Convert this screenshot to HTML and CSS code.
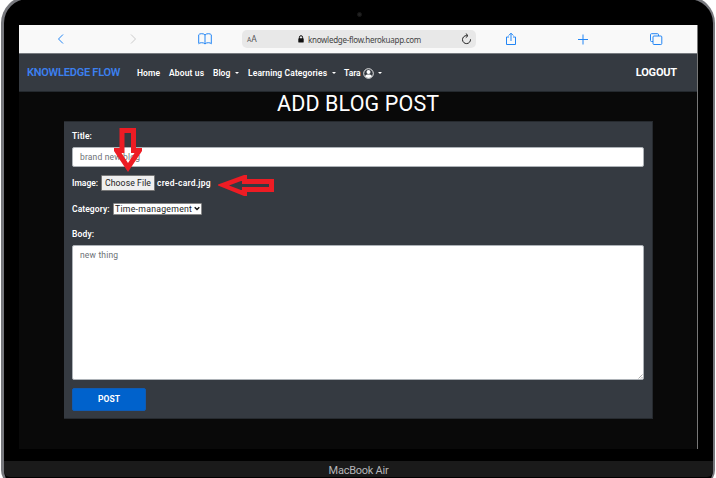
FILE: index.html
```html
<!DOCTYPE html>
<html lang="en">
<head>
<meta charset="utf-8">
<title>Knowledge Flow</title>
<link rel="stylesheet" href="styles.css">
</head>
<body>
<div class="laptop">
  <div class="bezel"><i class="camera"></i></div>
  <div class="screen">
    <div class="browser">
      <svg class="ic back" viewBox="0 0 14 14"><path d="M9 2.500 4.500 7 9 11.500"/></svg>
      <svg class="ic fwd" viewBox="0 0 14 14"><path d="M5 2.500 9.500 7 5 11.500"/></svg>
      <svg class="ic book" viewBox="0 0 14 14"><path d="M.7 11.500V2.800Q1.200 1.700 3.700 1.700T7 3v9Q6 10.700 3.700 10.700T.7 11.800M7 3Q8 1.700 10.300 1.700T13.300 2.800v9Q12.600 10.700 10.300 10.700T7 12"/></svg>
      <div class="address">
        <span class="aa"><small>A</small>A</span>
        <svg class="lock" viewBox="0 0 6 8"><path d="M1.400 4V2.300a1.600 1.600 0 0 1 3.200 0V4" fill="none" stroke="#111"/><rect x=".3" y="3.300" width="5.400" height="4.300" rx=".7" fill="#111"/></svg>
        <span class="url">knowledge-flow.herokuapp.com</span>
        <svg class="reload" viewBox="0 0 11 12"><path d="M9.500 6.300A4 4 0 1 1 5.500 2.600h1M4.800.5 7 2.600 4.800 4.700" fill="none" stroke="#222"/></svg>
      </div>
      <svg class="ic share" viewBox="0 0 14 14"><path d="M5 5H2.500v7.500h9V5H9M7 9V1.300M4.700 3.500 7 1.200l2.300 2.300"/></svg>
      <svg class="ic plus" viewBox="0 0 14 14"><path d="M7 2.500v10M2 7.500h10"/></svg>
      <svg class="ic tabs" viewBox="0 0 14 14"><rect x="4" y="4" width="8.800" height="8.500" rx="1"/><path d="M4 9.500H2.500q-1 0-1-1V2.700q0-1 1-1h6q1 0 1 1V4"/></svg>
    </div>
    <nav class="nav">
      <span class="brand">KNOWLEDGE FLOW</span>
      <span class="link home">Home</span>
      <span class="link about">About us</span>
      <span class="link blog">Blog</span><i class="caret"></i>
      <span class="link cats">Learning Categories</span><i class="caret"></i>
      <span class="link tara">Tara</span>
      <svg class="user" viewBox="0 0 11 11"><circle cx="5.500" cy="5.500" r="4.800" fill="none" stroke="#fff" stroke-width=".9"/><circle cx="5.500" cy="4.100" r="2" fill="#fff"/><path d="M2 8.300q.7-1.800 2.200-1.800h2.600q1.500 0 2.200 1.800-3.500 3.200-7 0" fill="#fff"/></svg><i class="caret"></i>
      <span class="logout">LOGOUT</span>
    </nav>
    <h1 class="heading"><span>ADD BLOG POST</span></h1>
    <main class="card">
      <div class="label title-label"><span class="t-title">Title:</span></div>
      <div class="field"><span class="t-brand">brand new blog</span></div>
      <div class="row image-row"><span class="label t-image">Image:</span><span class="choose"><span>Choose File</span></span><span class="label filename">cred-card.jpg</span></div>
      <div class="row category-row"><span class="label t-category">Category:</span><span class="select"><span>Time-management</span><svg viewBox="0 0 6 5"><path d="M.7 1.200 3 3.500l2.300-2.300" fill="none" stroke="#111" stroke-width="1.400"/></svg></span></div>
      <div class="label body-label"><span class="t-body">Body:</span></div>
      <div class="field area"><span class="t-new">new thing</span><svg class="grip" viewBox="0 0 5 5"><path d="M.5 4.500l4-4M3 4.500 4.500 3" stroke="#888" stroke-width=".7"/></svg></div>
      <div class="post"><span>POST</span></div>
    </main>
  </div>
  <div class="chin"><span>MacBook Air</span></div>
  <svg class="arrow down" viewBox="0 0 30 45"><path d="M6.500 1H23v20h6v3L15 45 1 24v-3h5.500zM11.500 6v20H8.500l6.500 10 6.500-10H18V6z"/></svg>
  <svg class="arrow left" viewBox="0 0 58 22"><path d="M1 11.500v-1L27 1h3v4h27v13H30v4h-3zM12 11.500 24 16h1v-3h27v-3H25V7h-1z"/></svg>
</div>
</body>
</html>
```
FILE: styles.css
```css
* { box-sizing: border-box; }
body { margin: 0; width: 716px; height: 478px; overflow: hidden; background: #fff; font-family: Roboto, "Liberation Sans", sans-serif; }
span { white-space: nowrap; }
svg, i { flex: none; }
.laptop { position: relative; width: 714px; height: 490px; margin: -4px 0 0 1px; background: #000; border: solid #77787d; border-width: 3px 2px 0 3px; border-radius: 27px 27px 16px 16px; display: flex; flex-direction: column; }
.bezel { height: 26px; display: flex; justify-content: center; align-items: center; padding: 4px 0 0 3px; }
.camera { width: 5px; height: 5px; margin-left: -2px; border-radius: 50%; background: #222; border: 1px solid #171717; }
.screen { width: 679px; height: 424px; margin-left: 15px; background: #090909; border-right: 1px solid #777; }
.browser { height: 29px; background: #f9f9f9; border-bottom: 1px solid #777b80; display: flex; align-items: center; }
.ic { width: 14px; height: 14px; fill: none; stroke: #2386f5; stroke-width: 1; }
.back { margin-left: 35px; }
.fwd { margin-left: 58px; stroke: #ccc; }
.book { margin-left: 58px; }
.address { width: 234px; height: 18px; margin-left: 30px; border-radius: 5px; background: #e8e8e8; display: flex; align-items: center; color: #555; }
.aa { width: 10px; margin-left: 5px; font-size: 8.5px; line-height: 10px; padding-top: 1px; }
.aa small { font-size: 6.5px; }
.lock { width: 6px; height: 8px; margin-left: 41px; }
.url { width: 114px; margin-left: 4px; font: 8px "Noto Sans", "Open Sans", sans-serif; letter-spacing: -.27px; color: #444; }
.reload { width: 11px; height: 12px; margin-left: 39px; }
.share { margin-left: 28px; }
.plus { margin-left: 58px; }
.tabs { margin-left: 59px; }
.nav { height: 38px; background: #353a41; border-bottom: 1px solid #24292e; display: flex; align-items: center; color: #fff; }
.brand { width: 94px; margin-left: 8px; color: #3c80ef; font-weight: 600; font-size: 11px; letter-spacing: -.24px; }
.link { font-size: 8.5px; font-weight: 600; }
.home { width: 23px; margin-left: 16px; letter-spacing: .1px; }
.about { width: 36px; margin-left: 9px; letter-spacing: .13px; }
.blog { width: 18px; margin-left: 8px; }
.cats { width: 80px; margin-left: 9px; letter-spacing: .12px; }
.tara { width: 17px; margin-left: 8px; }
.caret { width: 4px; height: 2px; margin-left: 4px; border: solid transparent; border-width: 2px 2px 0; border-top-color: #fff; }
.user { width: 11px; height: 11px; margin: 1px 0 0 2px; }
.logout { margin: 0 20px 0 auto; font-size: 11px; font-weight: 700; letter-spacing: -.18px; }
.heading { margin: 0; height: 29px; line-height: 24px; padding-left: 258px; font-size: 21.5px; font-weight: 400; letter-spacing: .13px; color: #fff; }
.card { width: 589px; height: 298px; margin-left: 45px; padding: 0 8px; background: #353a41; border: 1px solid #262a2f; border-left: 0; }
.label { font-size: 8.5px; font-weight: 600; color: #fff; }
.title-label { height: 25px; line-height: 28px; letter-spacing: .1px; }
.field { height: 20px; width: 572px; background: #fff; border: 1px solid #adb2b7; border-radius: 2px; padding-left: 7px; line-height: 18px; font-size: 8.5px; color: #6c7176; letter-spacing: .17px; }
.row { display: flex; align-items: center; }
.image-row { height: 32px; }
.choose { width: 54px; height: 16px; margin-left: 2px; background: #efefef; border: 1px solid #777; border-radius: 1px; padding-left: 3px; font-size: 8.7px; line-height: 14px; letter-spacing: .07px; color: #222; }
.t-image { width: 27px; }
.filename { margin-left: 2px; letter-spacing: .22px; }
.category-row { height: 19px; }
.t-category { width: 39px; letter-spacing: .08px; }
.select { width: 89px; height: 12px; margin-left: 2px; background: #fff; border: 1px solid #888; border-radius: 1px; display: flex; align-items: center; padding-left: 1px; font-size: 8.7px; letter-spacing: .27px; color: #222; }
.select span { width: 79px; }
.select svg { width: 6px; height: 5px; }
.body-label { height: 27px; line-height: 33px; letter-spacing: .15px; }
.area { position: relative; height: 135px; }
.grip { position: absolute; right: 0; bottom: 0; width: 5px; height: 5px; }
.post { width: 74px; height: 23px; margin-top: 8px; background: #0062cc; border: 1px solid #0f5bb4; border-radius: 2px; color: #fff; font-size: 8.5px; font-weight: 700; line-height: 21px; text-align: center; }
.chin { margin: 12px 0 0; height: 16px; background: #1a1a1a; border-radius: 0 0 6px 6px; color: #b5b5b8; font-size: 11px; line-height: 19px; letter-spacing: -.25px; text-align: center; }
.arrow { position: absolute; fill: #ed1c24; fill-rule: evenodd; }
.down { left: 109px; top: 128px; width: 30px; height: 45px; }
.left { left: 213px; top: 175px; width: 58px; height: 22px; }
```
